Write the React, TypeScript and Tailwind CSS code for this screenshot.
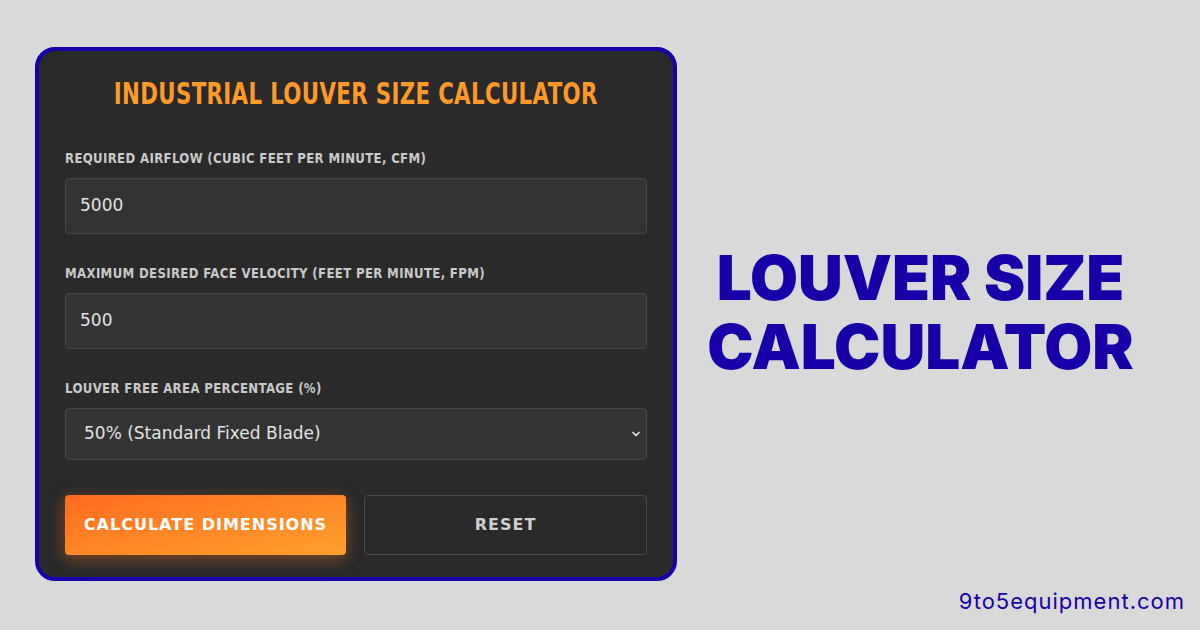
import { ChevronDown } from "lucide-react";

const heading = { fontFamily: '"DejaVu Sans", sans-serif' };
const body = { fontFamily: '"DejaVu Sans", sans-serif' };

function Field({ label, value, select }: { label: string; value: string; select?: boolean }) {
  return (
    <div className="flex flex-col">
      <label
        className="origin-left scale-x-[0.84] whitespace-nowrap text-[14px] font-bold uppercase leading-none tracking-[0.4px] text-[#c9c9c9]"
        style={heading}
      >
        {label}
      </label>
      <div
        className={`mt-[13px] flex items-center justify-between rounded-[4px] border border-[#474747] bg-[#333333] text-[17px] text-[#e2e2e2] ${
          select ? "h-[52px] pl-[18px] pr-[4px]" : "h-[56px] px-[14px]"
        }`}
        style={body}
      >
        <span>{value}</span>
        {select && <ChevronDown className="h-[12px] w-[12px] text-[#e2e2e2]" strokeWidth={3.5} />}
      </div>
    </div>
  );
}

export default function App() {
  return (
    <div className="relative flex h-[630px] w-[1200px] overflow-hidden bg-[#d9d9d9]">
      <div className="ml-[35px] mt-[47px] h-[534px] w-[642px] rounded-[20px] border-4 border-[#1800a8] bg-[#2a2a2a] px-[26px] pt-[28px]">
        <h1 className="flex justify-center text-[30px] font-bold uppercase leading-none tracking-[0.5px] text-[#ff9a2a]" style={heading}>
          <span className="shrink-0 scale-x-[0.71] whitespace-nowrap">Industrial Louver Size Calculator</span>
        </h1>
        <div className="mt-[42px] flex flex-col gap-[32px]">
          <Field label="Required Airflow (Cubic Feet per Minute, CFM)" value="5000" />
          <Field label="Maximum Desired Face Velocity (Feet per Minute, FPM)" value="500" />
          <Field label="Louver Free Area Percentage (%)" value="50% (Standard Fixed Blade)" select />
        </div>
        <div className="mt-[35px] flex gap-[18px]" style={body}>
          <button className="h-[60px] flex-1 rounded-[4px] bg-gradient-to-br from-[#ff6a1f] to-[#ffa02e] text-[16px] font-bold uppercase tracking-[1px] text-white shadow-[0_4px_16px_rgba(255,120,30,0.4)]">
            Calculate Dimensions
          </button>
          <button className="h-[60px] flex-1 rounded-[4px] border border-[#4a4a4a] bg-[#2a2a2a] text-[16px] font-bold uppercase tracking-[1px] text-[#cfcfcf]">
            Reset
          </button>
        </div>
      </div>
      <div
        className="flex flex-1 flex-col items-center pr-[36px] pt-[243px] text-[62px] font-black leading-[69px] text-[#1800a8]"
        style={{ fontFamily: "Inter, sans-serif" }}
      >
        <div>LOUVER SIZE</div>
        <div>CALCULATOR</div>
      </div>
      <div
        className="absolute bottom-[12px] right-[15px] text-[22px] tracking-[1px] text-[#1800a8]"
        style={{ fontFamily: "Inter, sans-serif" }}
      >
        9to5equipment.com
      </div>
    </div>
  );
}
